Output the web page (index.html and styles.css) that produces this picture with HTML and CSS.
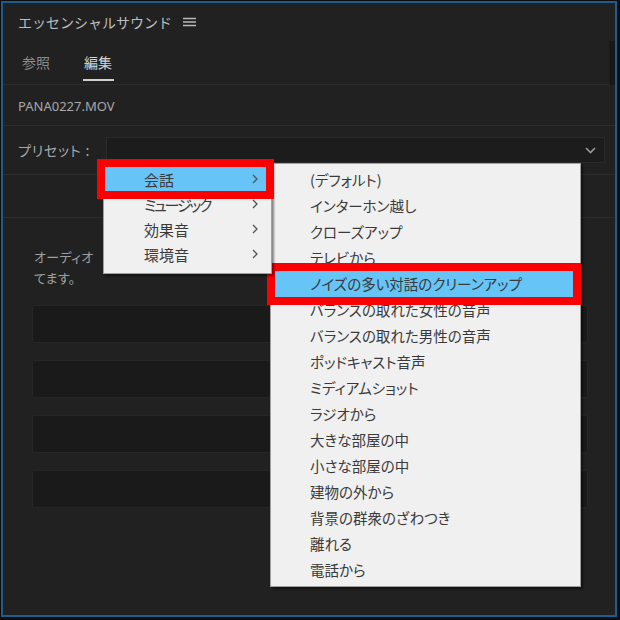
FILE: index.html
```html
<!DOCTYPE html>
<html lang="ja">
<head>
<meta charset="utf-8">
<link rel="stylesheet" href="styles.css">
</head>
<body>
<div class="panel">
  <div class="header">
    <span class="title">エッセンシャルサウンド</span>
    <svg class="burger" width="13" height="10" viewBox="0 0 13 10"><path d="M0 1.5H13M0 5H13M0 8.5H13" stroke="#b8b8b8" stroke-width="1.4"/></svg>
  </div>
  <div class="tabs">
    <span class="tab">参照</span>
    <span class="tab active">編集</span>
  </div>
  <div class="clip">PANA0227.MOV</div>
  <div class="preset">
    <span class="plabel">プリセット :</span>
    <div class="dropdown">
      <svg class="chev" width="11" height="7" viewBox="0 0 11 7"><path d="M1 1L5.5 5.5L10 1" fill="none" stroke="#9a9a9a" stroke-width="1.6"/></svg>
    </div>
  </div>
  <div class="blank"></div>
  <div class="content">
    <p class="desc">オーディオ<br>てます。</p>
    <div class="box"></div>
    <div class="box"></div>
    <div class="box"></div>
    <div class="box"></div>
  </div>
  <div class="thumb"></div>
</div>

<div class="menu main">
  <div class="item hl"><span>会話</span><svg width="6" height="10" viewBox="0 0 6 10"><path d="M1 1L5 5L1 9" fill="none" stroke="#555" stroke-width="1.3"/></svg></div>
  <div class="item"><span class="narrow">ミュージック</span><svg width="6" height="10" viewBox="0 0 6 10"><path d="M1 1L5 5L1 9" fill="none" stroke="#555" stroke-width="1.3"/></svg></div>
  <div class="item"><span>効果音</span><svg width="6" height="10" viewBox="0 0 6 10"><path d="M1 1L5 5L1 9" fill="none" stroke="#555" stroke-width="1.3"/></svg></div>
  <div class="item"><span>環境音</span><svg width="6" height="10" viewBox="0 0 6 10"><path d="M1 1L5 5L1 9" fill="none" stroke="#555" stroke-width="1.3"/></svg></div>
</div>

<div class="menu sub">
  <div class="sitem">(デフォルト)</div>
  <div class="sitem">インターホン越し</div>
  <div class="sitem">クローズアップ</div>
  <div class="sitem">テレビから</div>
  <div class="sitem hl">ノイズの多い対話のクリーンアップ</div>
  <div class="sitem">バランスの取れた女性の音声</div>
  <div class="sitem">バランスの取れた男性の音声</div>
  <div class="sitem">ポッドキャスト音声</div>
  <div class="sitem">ミディアムショット</div>
  <div class="sitem">ラジオから</div>
  <div class="sitem">大きな部屋の中</div>
  <div class="sitem">小さな部屋の中</div>
  <div class="sitem">建物の外から</div>
  <div class="sitem">背景の群衆のざわつき</div>
  <div class="sitem">離れる</div>
  <div class="sitem">電話から</div>
</div>
</body>
</html>
```

FILE: styles.css
```css
html, body {
  margin: 0;
  padding: 0;
}
body {
  width: 620px;
  height: 620px;
  background: #0e0e0e;
  font-family: "Noto Sans CJK JP", "Noto Sans", sans-serif;
  font-feature-settings: "palt";
  position: relative;
  overflow: hidden;
}
.panel {
  position: relative;
  margin: 1px 0 0 1px;
  width: 612px;
  height: 612px;
  border: 2px solid #1d5c8f;
  background: #212121;
  display: flex;
  flex-direction: column;
}
.header {
  height: 42px;
  display: flex;
  align-items: center;
  padding: 0 0 5px 15px;
  gap: 11px;
  box-sizing: border-box;
}
.title {
  color: #bdbdbd;
  font-size: 14px;
  font-feature-settings: normal;
}
.burger {
  margin-top: 1px;
}
.tabs {
  height: 40px;
  border-bottom: 1px solid #2d2d2d;
  display: flex;
  gap: 33px;
  padding-left: 19px;
  box-sizing: border-box;
}
.tab {
  color: #8c8c8c;
  font-size: 14px;
  line-height: 34px;
  height: 36px;
  box-sizing: border-box;
}
.tab.active {
  color: #d4d4d4;
  border-bottom: 2px solid #d0d0d0;
  padding: 0 2px 0 1px;
}
.clip {
  height: 41px;
  border-bottom: 1px solid #2d2d2d;
  box-sizing: border-box;
  color: #a8a8a8;
  font-size: 13px;
  padding-top: 2px;
  line-height: 38px;
  padding-left: 15px;
  font-family: "Noto Sans", "Noto Sans CJK JP", sans-serif;
}
.preset {
  height: 49px;
  border-bottom: 1px solid #2d2d2d;
  box-sizing: border-box;
  display: flex;
  align-items: center;
  padding-left: 15px;
  padding-right: 10px;
  gap: 7px;
}
.plabel {
  color: #a8a8a8;
  font-size: 14px;
  white-space: nowrap;
  width: 81px;
  letter-spacing: 0.8px;
}
.dropdown {
  flex: 1;
  height: 26px;
  background: #1c1c1c;
  border: 1px solid #2a2a2a;
  box-sizing: border-box;
  display: flex;
  align-items: center;
  justify-content: flex-end;
  padding-right: 8px;
}
.blank {
  height: 43px;
  border-bottom: 1px solid #2d2d2d;
  box-sizing: border-box;
}
.content {
  padding: 28px 27px 0 29px;
  display: flex;
  flex-direction: column;
  gap: 17px;
}
.desc {
  margin: 0 0 0 2px;
  color: #a0a0a0;
  font-size: 13px;
  line-height: 21px;
  letter-spacing: 0.3px;
}
.box {
  height: 38px;
  background: #1a1a1a;
  border: 1px solid #262626;
  box-sizing: border-box;
  border-radius: 2px;
}
.thumb {
  position: absolute;
  right: 0;
  top: 38px;
  width: 6px;
  height: 44px;
  background: #181818;
}
.menu {
  position: absolute;
  background: #f0f0f0;
  border: 1px solid #a0a0a0;
  box-sizing: border-box;
  box-shadow: 2px 2px 2px rgba(0, 0, 0, 0.45);
  color: #3a3a3a;
}
.main {
  left: 103px;
  top: 163px;
  width: 169px;
  height: 111px;
  padding-top: 2px;
  z-index: 3;
}
.item {
  height: 24px;
  margin: 1px 5px 1px 1px;
  display: flex;
  align-items: center;
  justify-content: space-between;
  padding: 0 8px 0 39px;
  font-size: 15px;
}
.narrow {
  letter-spacing: -2.2px;
}
.sub {
  left: 270px;
  top: 163px;
  width: 311px;
  height: 424px;
  padding-top: 3px;
  z-index: 2;
}
.sitem {
  height: 26px;
  line-height: 26px;
  padding-left: 39px;
  font-size: 14.5px;
  white-space: nowrap;
}
.sitem.hl {
  margin: 0 7px 0 4px;
  padding-left: 35px;
}
.hl {
  background: #66c4f6;
  outline: 8px solid #fb0000;
}
```
